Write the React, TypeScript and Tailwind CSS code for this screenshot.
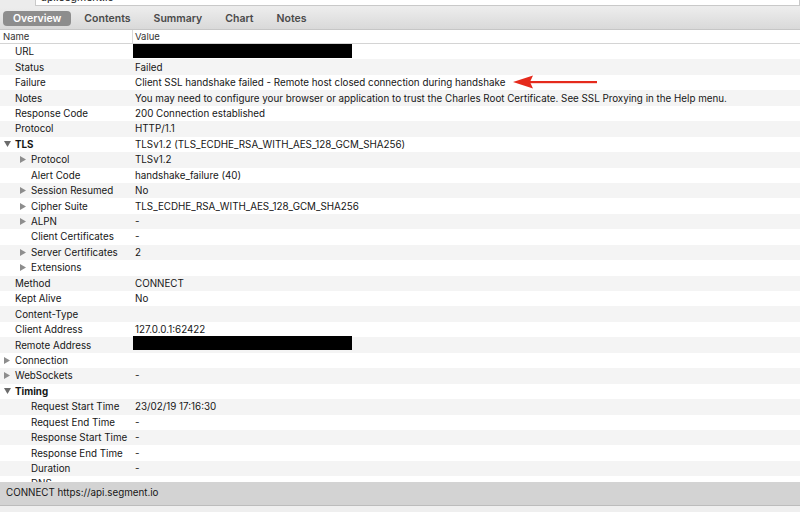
import React from "react";

type Row = {
  name: string;
  value?: string;
  level: 0 | 1;
  arrow?: "right" | "down";
  bold?: boolean;
  redact?: "top" | "up";
};

const rows: Row[] = [
  { name: "URL", level: 0, redact: "top" },
  { name: "Status", value: "Failed", level: 0 },
  { name: "Failure", value: "Client SSL handshake failed - Remote host closed connection during handshake", level: 0 },
  { name: "Notes", value: "You may need to configure your browser or application to trust the Charles Root Certificate. See SSL Proxying in the Help menu.", level: 0 },
  { name: "Response Code", value: "200 Connection established", level: 0 },
  { name: "Protocol", value: "HTTP/1.1", level: 0 },
  { name: "TLS", value: "TLSv1.2 (TLS_ECDHE_RSA_WITH_AES_128_GCM_SHA256)", level: 0, arrow: "down", bold: true },
  { name: "Protocol", value: "TLSv1.2", level: 1, arrow: "right" },
  { name: "Alert Code", value: "handshake_failure (40)", level: 1 },
  { name: "Session Resumed", value: "No", level: 1, arrow: "right" },
  { name: "Cipher Suite", value: "TLS_ECDHE_RSA_WITH_AES_128_GCM_SHA256", level: 1, arrow: "right" },
  { name: "ALPN", value: "-", level: 1, arrow: "right" },
  { name: "Client Certificates", value: "-", level: 1 },
  { name: "Server Certificates", value: "2", level: 1, arrow: "right" },
  { name: "Extensions", value: "", level: 1, arrow: "right" },
  { name: "Method", value: "CONNECT", level: 0 },
  { name: "Kept Alive", value: "No", level: 0 },
  { name: "Content-Type", value: "", level: 0 },
  { name: "Client Address", value: "127.0.0.1:62422", level: 0 },
  { name: "Remote Address", level: 0, redact: "up" },
  { name: "Connection", value: "", level: 0, arrow: "right" },
  { name: "WebSockets", value: "-", level: 0, arrow: "right" },
  { name: "Timing", value: "", level: 0, arrow: "down", bold: true },
  { name: "Request Start Time", value: "23/02/19 17:16:30", level: 1 },
  { name: "Request End Time", value: "-", level: 1 },
  { name: "Response Start Time", value: "-", level: 1 },
  { name: "Response End Time", value: "-", level: 1 },
  { name: "Duration", value: "-", level: 1 },
  { name: "DNS", value: "-", level: 1 },
];

function Arrow({ dir }: { dir: "right" | "down" }) {
  if (dir === "right") {
    return (
      <svg width="6" height="7" viewBox="0 0 6 7" className="shrink-0">
        <path d="M0 0 L6 3.5 L0 7 Z" fill="#8d8d8d" />
      </svg>
    );
  }
  return (
    <svg width="7" height="6" viewBox="0 0 7 6" className="shrink-0">
      <path d="M0 0 L7 0 L3.5 6 Z" fill="#6b6b6b" />
    </svg>
  );
}

const tabs = ["Overview", "Contents", "Summary", "Chart", "Notes"];

export default function App() {
  return (
    <div
      className="w-[800px] h-[512px] flex flex-col overflow-hidden bg-white text-[#161616]"
      style={{ fontFamily: "Inter, 'Liberation Sans', sans-serif" }}
    >
      {/* Filter strip (cut off at top) */}
      <div className="h-[8px] shrink-0 bg-[#ececec] flex flex-col justify-start overflow-hidden">
        <div className="h-[22px] -mt-[16px] flex items-end shrink-0">
          <div className="w-[35px] pl-[4px] text-[10.5px] text-[#555] leading-[26px]">Filter:</div>
          <div className="flex-1 h-[22px] bg-white border border-[#c9c9c9] pl-[5px] text-[10.5px] leading-[26px]">
            api.segment.io
          </div>
        </div>
      </div>

      {/* Tab bar */}
      <div className="h-[22px] shrink-0 bg-gradient-to-b from-[#ececec] to-[#d9d9d9] border-b border-[#c6c6c6] flex items-center gap-[3px] pl-[3px]">
        {tabs.map((t, i) => (
          <div
            key={t}
            className={
              i === 0
                ? "h-[15px] px-[10px] rounded-[4px] bg-[#8d8d8d] text-white text-[10.5px] font-semibold leading-[15px]"
                : "h-[15px] px-[10px] text-[#4a4a4a] text-[10.5px] font-semibold leading-[15px]"
            }
          >
            {t}
          </div>
        ))}
      </div>

      {/* Header */}
      <div className="h-[14px] shrink-0 flex border-b border-[#d4d4d4] text-[9.5px] text-[#333] leading-[13px]">
        <div className="w-[133px] pl-[3px] border-r border-[#dadada]">Name</div>
        <div className="pl-[2px]">Value</div>
      </div>

      {/* Rows */}
      <div className="flex-1 min-h-0 overflow-hidden relative">
        {rows.map((r, i) => (
          <div
            key={i}
            className={
              (i % 2 === 1 ? "bg-[#f4f4f4] " : "bg-white ") +
              "h-[15.45px] flex items-center text-[9.8px] leading-[15px] whitespace-nowrap"
            }
          >
            <div
              className={
                (r.level === 0 ? "pl-[4px] " : "pl-[20px] ") +
                "w-[135px] shrink-0 flex items-center gap-[5px]"
              }
            >
              <div className="w-[6px] flex justify-center">{r.arrow ? <Arrow dir={r.arrow} /> : null}</div>
              <span className={r.bold ? "font-bold" : ""}>{r.name}</span>
            </div>
            {r.redact === "top" ? (
              <div className="w-[219px] h-[14px] bg-black -ml-[2px] -mt-[2px]" />
            ) : r.redact === "up" ? (
              <div className="w-[219px] h-[14px] bg-black -ml-[2px] -mt-[5px]" />
            ) : (
              <span>{r.value}</span>
            )}
          </div>
        ))}
        {/* red annotation arrow */}
        <svg className="absolute left-[511px] top-[31px]" width="88" height="14" viewBox="0 0 88 14">
          <path d="M2 7 L22 0.5 L19 7 L22 13.5 Z" fill="#e52a1c" />
          <rect x="18" y="6" width="68" height="2.2" fill="#e52a1c" />
        </svg>
      </div>

      {/* Status bar */}
      <div className="h-[24px] shrink-0 bg-[#d3d3d3] border-b border-[#bcbcbc] flex items-center pl-[6px] text-[9.8px] text-[#161616]">
        CONNECT https://api.segment.io
      </div>
      <div className="h-[6px] shrink-0 bg-[#efefef]" />
    </div>
  );
}
